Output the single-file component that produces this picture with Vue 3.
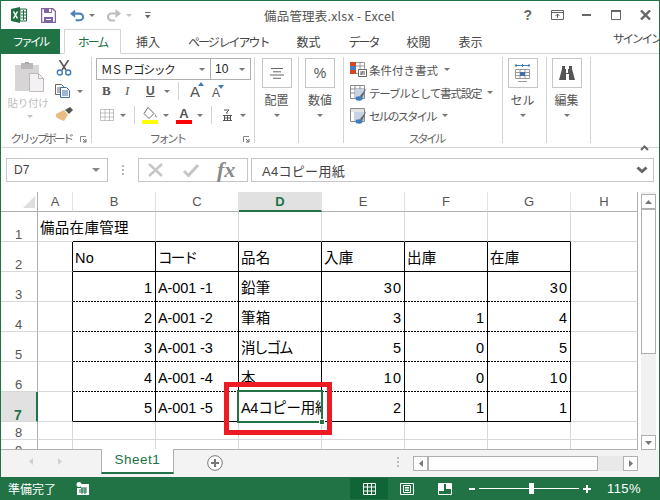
<script setup>
const tabs = [
  { label: '挿入' },
  { label: 'ページ レイアウト', kana: true },
  { label: '数式' },
  { label: 'データ', kana: true },
  { label: '校閲' },
  { label: '表示' },
]
const cols = ['A', 'B', 'C', 'D', 'E', 'F', 'G', 'H']
const rows = [
  ['備品在庫管理', '', '', '', '', '', '', ''],
  ['', 'No', 'コード', '品名', '入庫', '出庫', '在庫', ''],
  ['', 1, 'A-001 -1', '鉛筆', 30, '', 30, ''],
  ['', 2, 'A-001 -2', '筆箱', 3, 1, 4, ''],
  ['', 3, 'A-001 -3', '消しゴム', 5, 0, 5, ''],
  ['', 4, 'A-001 -4', '本', 10, 0, 10, ''],
  ['', 5, 'A-001 -5', 'A4コピー用紙', 2, 1, 1, ''],
  ['', '', '', '', '', '', '', ''],
  ['', '', '', '', '', '', '', ''],
]

function cellClass(r, c, value) {
  const inBox = r >= 1 && r <= 6
  const inCols = c >= 1 && c <= 6
  return {
    num: typeof value === 'number',
    code: c === 2 && r >= 2,
    narrow: value === 'コード' || value === '消しゴム',
    tight: value === 'A4コピー用紙',
    'line-right': inBox && c <= 6,
    'no-right': r === 0 && c === 0,
    'line-bottom': (r === 0 || r === 1 || r === 6) && inCols,
    'dot-bottom': r >= 2 && r <= 5 && inCols,
  }
}
</script>

<template>
  <div class="win">
    <header class="title">
      <div class="qat">
        <svg class="xl" width="16" height="16" viewBox="0 0 16 16">
          <path d="M0 2 9 0v16l-9-2z" fill="#1e6e41" />
          <path d="M9 2h6.500v12H9z" fill="#fff" stroke="#1e6e41" />
          <path d="M10 5h5M10 8h5M10 11h5M12.500 3v10" stroke="#1e6e41" />
          <path d="m2.500 4.500 4 7M6.500 4.500l-4 7" stroke="#fff" stroke-width="1.500" />
        </svg>
        <svg class="save" width="15" height="15" viewBox="0 0 15 15">
          <path d="M.500.500h11l3 3v11H.500z" fill="#fff" stroke="#8064a2" stroke-width="1.500" />
          <path d="M3 0h8v5H3zM3 9h9v6H3z" fill="#8064a2" />
          <path d="M8 1h2v3H8zM5 11h5v1H5z" fill="#fff" />
        </svg>
        <svg class="undo" width="15" height="13" viewBox="0 0 16 13">
          <path d="M2 4.500h8a4 3.500 0 0 1 0 7H6" fill="none" stroke="#4f81bd" stroke-width="2.200" />
          <path d="M5.500 0v9L0 4.500z" fill="#4f81bd" />
        </svg>
        <i class="caret undo-caret"></i>
        <svg class="redo" width="15" height="13" viewBox="0 0 15 13">
          <path d="M13 4.500H5.500a3.500 3.500 0 0 0 0 7H9" fill="none" stroke="#bdbdbd" stroke-width="2.200" />
          <path d="M9.500 0v9L15 4.500z" fill="#bdbdbd" />
        </svg>
        <i class="caret redo-caret"></i>
        <svg class="custom" width="6" height="7" viewBox="0 0 6 7">
          <path d="M0 .500h5.500" stroke="#666" />
          <path d="M0 3h5.500L2.750 6.500z" fill="#666" />
        </svg>
      </div>
      <div class="doc">備品管理表.xlsx - Excel</div>
      <div class="winbtns">
        <span class="help">?</span>
        <svg width="13" height="10" viewBox="0 0 13 10">
          <path d="M.500.500h12v9H.500z M.500 2.500h12" fill="none" stroke="#666" />
          <path d="M6.500 8V4M4.500 6l2-2 2 2" fill="none" stroke="#666" />
        </svg>
        <svg width="9" height="2" viewBox="0 0 9 2"><path d="M0 0h9v2H0z" fill="#666" /></svg>
        <svg width="10" height="10" viewBox="0 0 10 10">
          <path d="M.500.500h9v9h-9z" fill="none" stroke="#666" />
          <path d="M0 0h10v2H0z" fill="#666" />
        </svg>
        <svg width="11" height="10" viewBox="0 0 11 10">
          <path d="m1 .500 9 9M10 .500l-9 9" stroke="#666" stroke-width="2.400" />
        </svg>
      </div>
    </header>

    <nav class="tabs">
      <div class="file">ファイル</div>
      <div class="home">ホーム</div>
      <div v-for="t in tabs" :key="t.label" class="tab" :class="{ kana: t.kana }">{{ t.label }}</div>
      <div class="signin">サインイン</div>
    </nav>

    <section class="ribbon">
      <div class="group g-clip">
        <div class="g-body clip-body">
          <div class="paste">
            <svg width="29" height="30" viewBox="0 0 29 30">
              <path d="M0 3h24v26H0z" fill="#d8d5d6" />
              <path d="M6 1h12v6H6z" fill="#bcb8b9" />
              <path d="M10 0h4v2h-4z" fill="#a9a5a6" />
              <path d="M14.500 11.500h9l5 5v13h-14z" fill="#f3f1f3" stroke="#bdb9ba" />
              <path d="M23.500 11.500v5h5" fill="none" stroke="#bdb9ba" />
            </svg>
            <span class="paste-label">貼り付け</span>
            <i class="caret pale"></i>
          </div>
          <div class="clip-tools">
            <svg width="16" height="16" viewBox="0 0 16 16">
              <path d="m3.500 0 6.500 10M12.500 0 6 10" stroke="#555" stroke-width="1.600" />
              <circle cx="3.800" cy="12.500" r="2.500" fill="#fff" stroke="#3f7cb8" stroke-width="1.400" />
              <circle cx="12.200" cy="12.500" r="2.500" fill="#fff" stroke="#3f7cb8" stroke-width="1.400" />
            </svg>
            <div class="copy">
              <svg width="16" height="14" viewBox="0 0 16 14">
                <path d="M.500.500h6l2 2v8h-8z" fill="#fff" stroke="#666" />
                <path d="M2 4h4M2 6h4M2 8h4" stroke="#666" />
                <path d="M5.500 3.500h6l3 3v7h-9z" fill="#fff" stroke="#3f6f9f" />
                <path d="M7 7h6M7 9h6M7 11h6" stroke="#3f6f9f" />
              </svg>
              <i class="caret"></i>
            </div>
            <svg class="brush" width="17" height="14" viewBox="0 0 17 14">
              <path d="m0 7 8-4 4 5-4 6-5-2-3-2z" fill="#e8bd81" />
              <path d="m9 3 5-3 3 3-4 4z" fill="#555" />
            </svg>
          </div>
        </div>
        <div class="g-label left">クリップボード<svg class="launch" width="7" height="7" viewBox="0 0 7 7"><path d="M.500 6V.500H6" fill="none" stroke="#888" /><path d="M3 3l3 3M3 6h3V3" fill="none" stroke="#666" /></svg></div>
      </div>

      <div class="group g-font">
        <div class="g-body font-body">
          <div class="font-row1">
            <div class="combo fname">ＭＳ Ｐゴシック<i class="caret"></i></div>
            <div class="combo fsize">10<i class="caret"></i></div>
          </div>
          <div class="font-row2">
            <b class="bi">B</b>
            <i class="bi it">I</i>
            <span class="bi un">U</span><i class="caret"></i>
            <span class="vsep"></span>
            <span class="grow">A<svg width="6" height="4" viewBox="0 0 6 4"><path d="M0 4h6L3 0z" fill="#3f7cb8" /></svg></span>
            <span class="grow small">A<svg width="6" height="4" viewBox="0 0 6 4"><path d="M0 0h6L3 4z" fill="#3f7cb8" /></svg></span>
          </div>
          <div class="font-row3">
            <svg width="14" height="12" viewBox="0 0 14 12">
              <path d="M.500.500h13v11H.500zM5 .500v11M9.500.500v11M.500 4h13M.500 8h13" fill="none" stroke="#8a8a8a" stroke-dasharray="1 1" />
            </svg>
            <i class="caret"></i>
            <span class="vsep"></span>
            <span class="fill">
              <svg width="16" height="13" viewBox="0 0 16 13">
                <path d="m6 .500 6 6-5 5-5-5z" fill="#fff" stroke="#666" />
                <path d="M13 7c1.500 2 2 3 1.500 3.500-1 .5-1.500-1-1.500-3.500z" fill="#888" />
              </svg>
              <span class="bar yellow"></span>
            </span>
            <i class="caret"></i>
            <span class="fcolor">A<span class="bar red"></span></span>
            <i class="caret"></i>
            <span class="vsep"></span>
            <svg class="phon" width="9" height="12" viewBox="0 0 9 12">
              <path d="M1 1h5L3.500 3.500M4 3v2" fill="none" stroke="#555" />
              <path d="M0 6.500h9M1.500 6.500v5M7.500 6.500v5M4.500 6.500v5M1.500 9h6M0 11.500h9" fill="none" stroke="#555" />
            </svg>
            <i class="caret"></i>
          </div>
        </div>
        <div class="g-label left">フォント<svg class="launch" width="7" height="7" viewBox="0 0 7 7"><path d="M.500 6V.500H6" fill="none" stroke="#888" /><path d="M3 3l3 3M3 6h3V3" fill="none" stroke="#666" /></svg></div>
      </div>

      <div class="group g-mini">
        <div class="mini">
          <span class="mini-box">
            <svg width="14" height="11" viewBox="0 0 14 11"><path d="M1 .500h12M3 3.800h8M0 7h14M3 10.300h8" stroke="#666" /></svg>
          </span>
          <span class="mini-label">配置</span>
          <i class="caret"></i>
        </div>
      </div>
      <div class="group g-mini wide">
        <div class="mini shift-a">
          <span class="mini-box pct">%</span>
          <span class="mini-label">数値</span>
          <i class="caret"></i>
        </div>
      </div>

      <div class="group g-style">
        <div class="g-body style-body">
          <div class="style-row">
            <svg width="17" height="15" viewBox="0 0 17 15">
              <path d="M.500.500h14v11H.500z" fill="#fff" stroke="#999" />
              <path d="M0 0h6v4H0z" fill="#d24726" />
              <path d="M0 4h6v4H0z" fill="#4a7ebb" />
              <path d="M0 8h6v4H0z" fill="#d24726" />
              <path d="M6 4h9M10 0v8" stroke="#999" />
              <path d="M8.500 7.500h8v7h-8z" fill="#fff" stroke="#666" />
              <path d="M10 10h5M10 12h5M13 9l-2 4" stroke="#666" />
            </svg>
            <span>条件付き書式</span><i class="caret"></i>
          </div>
          <div class="style-row">
            <svg width="17" height="16" viewBox="0 0 17 16">
              <path d="M.500.500h14v13H.500zM5 .500v13M10 .500v13M.500 4h14M.500 8h14" fill="#fff" stroke="#8a8a8a" />
              <path d="M5 4h9v9H5z" fill="#c5d3e5" />
              <path d="M16.500 3 10 11l2 2z" fill="#666" />
              <ellipse cx="9" cy="13.500" rx="3.500" ry="2.200" fill="#3f7cb8" />
            </svg>
            <span class="st-table">テーブルとして書式設定</span><i class="caret"></i>
          </div>
          <div class="style-row">
            <svg width="17" height="16" viewBox="0 0 17 16">
              <path d="M.500.500h14v13H.500z" fill="#fff" stroke="#8a8a8a" />
              <path d="M1 1h13v3H1z" fill="#e4e4e4" />
              <path d="M4 4h10v9H4z" fill="#c5d3e5" />
              <path d="M16.500 3 10 11l2 2z" fill="#666" />
              <ellipse cx="9" cy="13.500" rx="3.500" ry="2.200" fill="#3f7cb8" />
            </svg>
            <span class="st-cell">セルのスタイル</span><i class="caret"></i>
          </div>
        </div>
        <div class="g-label">スタイル</div>
      </div>

      <div class="group g-mini">
        <div class="mini shift-b">
          <span class="mini-box">
            <svg width="15" height="19" viewBox="0 0 15 19">
              <path d="M.500 5.500h14v9H.500zM5 5.500v9M10 5.500v9M.500 8.500h14M.500 11.500h14" fill="none" stroke="#999" />
              <path d="M5 8h5v4H5z" fill="#3f6fb0" />
              <path d="M0 1.500h15M1 0v3M14 0v3M7.500 0v3" stroke="#3f7cb8" />
              <path d="M3 17.500h9" stroke="#999" />
            </svg>
          </span>
          <span class="mini-label">セル</span>
          <i class="caret"></i>
        </div>
      </div>
      <div class="group g-mini">
        <div class="mini shift-b">
          <span class="mini-box">
            <svg width="16" height="14" viewBox="0 0 16 14">
              <path d="M3 0h3v3h1v4h2V3h1V0h3v3l3 11h-6V8H7v6H0L3 3z" fill="#555" />
            </svg>
          </span>
          <span class="mini-label">編集</span>
          <i class="caret"></i>
        </div>
      </div>

      <div class="collapse">
        <svg width="9" height="6" viewBox="0 0 9 6"><path d="m1 5 3.500-3.500L8 5" fill="none" stroke="#666" stroke-width="2" /></svg>
      </div>
    </section>

    <section class="formula">
      <div class="namebox">D7<i class="caret"></i></div>
      <div class="grip"><span></span><span></span><span></span></div>
      <div class="fxbox">
        <svg width="15" height="14" viewBox="0 0 15 14"><path d="m1 1 13 12M14 1 1 13" stroke="#c6c6c6" stroke-width="2.400" /></svg>
        <svg width="16" height="13" viewBox="0 0 16 13"><path d="m1 7 4.500 4.500L15 1" fill="none" stroke="#c6c6c6" stroke-width="3" /></svg>
        <span class="fx">fx</span>
      </div>
      <div class="input">
        <span>A4コピー用紙</span>
        <svg width="12" height="8" viewBox="0 0 12 8"><path d="m1.500 1.500 4.500 4 4.500-4" fill="none" stroke="#666" stroke-width="3" /></svg>
      </div>
    </section>

    <section class="sheet-wrap">
      <div class="sheet">
        <div class="corner"><svg width="12" height="12" viewBox="0 0 12 12"><path d="M12 0v12H0z" fill="#dedede" /></svg></div>
        <div v-for="c in cols" :key="c" class="colhead" :class="{ active: c === 'D' }">{{ c }}</div>
        <template v-for="(row, r) in rows" :key="r">
          <div class="rowhead" :class="{ active: r === 6 }">{{ r + 1 }}</div>
          <div v-for="(value, c) in row" :key="c" class="cell" :class="cellClass(r, c, value)">{{ value }}</div>
        </template>
        <div class="sel"><i class="handle"></i></div>
        <div class="redbox"></div>
      </div>
      <div class="vscroll">
        <div class="sb-btn"><svg width="7" height="4" viewBox="0 0 7 4"><path d="M0 4h7L3.500 0z" fill="#777" /></svg></div>
        <div class="sb-thumb"></div>
        <div class="sb-btn"><svg width="7" height="4" viewBox="0 0 7 4"><path d="M0 0h7L3.500 4z" fill="#777" /></svg></div>
      </div>
    </section>

    <section class="sheettabs">
      <div class="nav">
        <svg width="4" height="7" viewBox="0 0 4 7"><path d="M4 0v7L0 3.500z" fill="#d0d0d0" /></svg>
        <svg width="4" height="7" viewBox="0 0 4 7"><path d="M0 0v7l4-3.500z" fill="#d0d0d0" /></svg>
      </div>
      <div class="stab">Sheet1</div>
      <svg class="plus" width="16" height="16" viewBox="0 0 16 16">
        <circle cx="8" cy="8" r="7.300" fill="#fff" stroke="#777" />
        <path d="M8 4v8M4 8h8" stroke="#777" stroke-width="2" />
      </svg>
      <div class="hgrip"><span></span><span></span><span></span></div>
      <div class="hscroll">
        <div class="hb"><svg width="4" height="7" viewBox="0 0 4 7"><path d="M4 0v7L0 3.500z" fill="#777" /></svg></div>
        <div class="h-thumb"></div>
        <div class="h-track"></div>
        <div class="hb"><svg width="4" height="7" viewBox="0 0 4 7"><path d="M0 0v7l4-3.500z" fill="#777" /></svg></div>
      </div>
    </section>

    <footer class="status">
      <span class="ready">準備完了</span>
      <svg class="macro" width="13" height="13" viewBox="0 0 13 13">
        <circle cx="3" cy="2.500" r="2.500" fill="#fff" />
        <path d="M5 2h8v11H1V6h4z" fill="#fff" />
        <path d="M3 8h8M3 10h8M5 6h6M6 6v6M9 6v6" stroke="#217346" />
      </svg>
      <div class="views">
        <span class="view on">
          <svg width="13" height="12" viewBox="0 0 13 12"><path d="M.500.500h12v11H.500zM4.500.500v11M8.500.500v11M.500 4h12M.500 8h12" fill="none" stroke="#fff" /></svg>
        </span>
        <span class="view">
          <svg width="14" height="12" viewBox="0 0 14 12"><path d="M.500.500h13v11H.500z" fill="none" stroke="#fff" /><path d="M3.500 2.500h7v7h-7zM5 4.500h4M5 6h4M5 7.500h4" fill="none" stroke="#fff" /></svg>
        </span>
        <span class="view">
          <svg width="14" height="12" viewBox="0 0 14 12"><path d="M.500.500h13v11H.500z" fill="none" stroke="#fff" /><path d="M1 1h5v7H1zM8 1h5v5H8z" fill="#fff" /></svg>
        </span>
      </div>
      <div class="zoom">
        <span class="zbtn minus"></span>
        <div class="ztrack"><span class="zknob"></span></div>
        <span class="zbtn plusb"></span>
        <span class="zpct">115%</span>
      </div>
    </footer>
  </div>
</template>

<style>
html, body { margin: 0; overflow: hidden; background: #fff; }
</style>

<style scoped>
.win {
  width: 660px;
  height: 500px;
  box-sizing: border-box;
  border: solid #217346;
  border-width: 1px 1px 0;
  background: #fff;
  display: flex;
  flex-direction: column;
  overflow: hidden;
  color: #444;
  font: 12px "Noto Sans", "Noto Sans CJK JP", sans-serif;
}
.caret {
  display: inline-block;
  width: 0;
  height: 0;
  border: 3px solid transparent;
  border-top: 3px solid #777;
  border-bottom: 0;
  flex: none;
}
.caret.pale { border-top-color: #c4c4c4; }

/* Title */
.title { height: 28px; display: flex; align-items: center; flex: none; position: relative; }
.qat { display: flex; align-items: center; width: 263px; flex: none; height: 28px; }
.xl { margin-left: 10px; }
.save { margin-left: 14px; }
.undo { margin-left: 14px; }
.undo-caret { margin-left: 4px; }
.redo { margin-left: 11px; }
.redo-caret { margin-left: 5px; border-top-color: #c4c4c4; }
.custom { margin-left: 13px; }
.doc { color: #555; font-size: 12.500px; letter-spacing: .2px; white-space: nowrap; font-family: "Noto Sans CJK JP", sans-serif; }
.winbtns { margin-left: auto; display: flex; align-items: center; padding-right: 8px; }
.winbtns > svg:nth-of-type(1) { margin-left: 19px; }
.winbtns > svg:nth-of-type(2) { margin-left: 18px; }
.winbtns > svg:nth-of-type(3) { margin-left: 20px; }
.winbtns > svg:nth-of-type(4) { margin-left: 19px; }
.help { font: bold 14px "Liberation Sans", sans-serif; color: #666; }

/* Tabs */
.tabs { height: 25px; display: flex; flex: none; position: relative; border-bottom: 1px solid #d4d4d4; box-sizing: border-box; font-family: "Noto Sans CJK JP", sans-serif; }
.file { width: 60px; margin-left: -1px; background: #217346; color: #fff; font-size: 11.500px; letter-spacing: -2.800px; line-height: 25px; text-align: center; height: 25px; flex: none; }
.home { width: 57px; margin-left: 4px; height: 25px; box-sizing: border-box; border: 1px solid #d4d4d4; border-bottom: 1px solid #fff; background: #fff; color: #217346; text-align: center; line-height: 24px; font-size: 12px; letter-spacing: -2px; flex: none; }
.tab { font-size: 12px; line-height: 25px; padding: 0 14px; white-space: nowrap; flex: none; }
.tab.kana { letter-spacing: -2px; }
.home + .tab { padding-left: 15px; }
.signin { position: absolute; left: 612px; top: -3px; font-size: 11.500px; letter-spacing: -2px; line-height: 25px; white-space: nowrap; }

/* Ribbon */
.ribbon { height: 94px; display: flex; flex: none; padding: 3px 0 0; box-sizing: border-box; border-bottom: 1px solid #d4d4d4; position: relative; font-family: "Noto Sans CJK JP", sans-serif; }
.group { border-right: 1px solid #d4d4d4; height: 86px; display: flex; flex-direction: column; box-sizing: border-box; flex: none; }
.g-body { flex: 1; display: flex; min-height: 0; }
.g-label { height: 12px; line-height: 12px; margin-bottom: -1px; font-size: 11.500px; letter-spacing: -2.800px; color: #666; text-align: center; position: relative; white-space: nowrap; flex: none; }
.g-label.left { padding-right: 16px; }
.launch { position: absolute; right: 4px; top: 4px; }
.g-clip { width: 91px; padding-left: 6px; }
.clip-body { gap: 6px; padding-top: 2px; }
.paste { width: 42px; display: flex; flex-direction: column; align-items: center; padding-top: 3px; }
.paste svg { margin-left: 3px; flex: none; }
.paste-label { color: #bdbdbd; font-size: 10.500px; white-space: nowrap; line-height: 14px; margin-top: 4px; letter-spacing: -.3px; }
.paste .caret { margin-top: 5px; margin-left: 3px; }
.clip-tools { display: flex; flex-direction: column; gap: 8px; padding-top: 1px; align-items: flex-start; padding-left: 1px; }
.copy { display: flex; align-items: center; gap: 6px; margin-left: -1px; }
.brush { margin-top: 1px; }
.g-font { width: 163px; padding-left: 4px; }
.font-body { flex-direction: column; padding-top: 1px; }
.font-row1 { display: flex; height: 22px; flex: none; }
.combo { border: 1px solid #b0b0b0; box-sizing: border-box; height: 22px; display: flex; align-items: center; justify-content: space-between; padding: 0 3px 0 4px; color: #222; font-size: 11.500px; white-space: nowrap; }
.combo .caret { margin-right: 2px; }
.fname { width: 115px; letter-spacing: -1.200px; }
.fsize { width: 40px; border-left: 0; font-family: "Liberation Sans", sans-serif; font-size: 12px; letter-spacing: 0; }
.font-row2 { display: flex; align-items: center; height: 22px; padding-left: 6px; flex: none; }
.bi { font: bold 13px "Liberation Serif", serif; width: 24px; color: #555; }
.bi.it { font: italic 13px "Liberation Serif", serif; margin-left: -1px; width: 21px; }
.bi.un { font: bold 12px "Liberation Sans", sans-serif; width: 14px; text-decoration: underline; margin-right: 4px; }
.vsep { width: 1px; height: 18px; background: #d4d4d4; flex: none; }
.font-row2 .vsep { margin: 0 11px 0 8px; }
.font-row3 .vsep { margin: 0 7px 0 8px; }
.grow { font: 15px "Liberation Sans", sans-serif; color: #555; position: relative; margin-right: 8px; display: inline-flex; align-items: flex-start; }
.grow.small { font-size: 12px; margin-top: 3px; }
.grow svg { margin-top: -1px; margin-left: -2px; }
.font-row3 { display: flex; align-items: center; height: 20px; margin-top: 3px; padding-left: 4px; flex: none; }
.font-row3 > .caret { margin-left: 5px; }
.font-row3 > svg + .caret { margin-left: 6px; }
.font-row3 > .phon + .caret { margin-left: 8px; }
.fill { display: flex; flex-direction: column; align-items: center; width: 16px; }
.fcolor { font: bold 13px/13px "Liberation Sans", sans-serif; color: #555; display: flex; flex-direction: column; align-items: center; width: 16px; margin-left: 7px; }
.bar { display: block; width: 16px; height: 4px; }
.yellow { background: #ffff00; }
.red { background: #ff0000; }
.phon { margin-left: 4px; }
.g-mini { width: 44px; }
.g-mini.wide { width: 45px; }
.mini { display: flex; flex-direction: column; align-items: center; padding-top: 1px; }
.shift-a { padding-right: 2px; }
.shift-b { padding-right: 4px; }
.mini-box { width: 30px; height: 30px; border: 1px solid #c6c6c6; box-sizing: border-box; display: flex; align-items: center; justify-content: center; color: #555; }
.pct { font: 14px "Liberation Sans", sans-serif; }
.mini-label { font-size: 12px; line-height: 16px; margin-top: 4px; color: #555; white-space: nowrap; }
.mini .caret { margin-top: 6px; }
.g-style { width: 159px; padding-left: 6px; }
.style-body { flex-direction: column; padding-top: 1px; }
.style-row { display: flex; align-items: center; gap: 2px; height: 23px; flex: none; font-size: 11.500px; color: #555; white-space: nowrap; }
.st-table { letter-spacing: -1.200px; }
.st-cell { letter-spacing: -2px; }
.style-row .caret { margin-left: 4px; }
.collapse { position: absolute; left: 639px; top: 83px; }

/* Formula */
.formula { height: 44px; flex: none; display: flex; align-items: flex-start; padding-top: 10px; box-sizing: border-box; }
.namebox { margin-left: 5px; width: 102px; height: 24px; box-sizing: border-box; border: 1px solid #c6c6c6; display: flex; align-items: center; justify-content: space-between; padding: 0 7px; font: 12px "Liberation Sans", sans-serif; color: #444; }
.namebox .caret { border-width: 4px 4px 0; border-top-color: #888; }
.grip { width: 30px; height: 24px; display: flex; flex-direction: column; align-items: center; justify-content: center; gap: 2px; }
.grip span, .hgrip span { display: block; width: 2px; height: 2px; background: #bbb; }
.fxbox { width: 110px; height: 24px; box-sizing: border-box; border: 1px solid #c6c6c6; display: flex; align-items: center; padding-left: 9px; gap: 21px; }
.fxbox svg + svg { margin-left: -1px; }
.fx { font: italic bold 22px/22px "Liberation Serif", serif; color: #8a8a8a; margin-left: -3px; }
.input { margin-left: 3px; width: 403px; height: 24px; box-sizing: border-box; border: 1px solid #c6c6c6; display: flex; align-items: center; justify-content: space-between; padding: 0 5px 0 10px; font: 13px "Liberation Sans", "Noto Sans CJK JP", sans-serif; letter-spacing: .3px; color: #444; }

/* Sheet */
.sheet-wrap { height: 258px; flex: none; display: flex; overflow: hidden; }
.sheet {
  width: 637px;
  height: 258px;
  flex: none;
  position: relative;
  display: grid;
  grid-template-columns: 37px 35px repeat(6, 83px) 67px;
  grid-template-rows: 20px repeat(7, 30px) 18px 18px;
  overflow: hidden;
  box-sizing: border-box;
  border-bottom: 1px solid #b0b0b0;
  font: 14.500px "Liberation Sans", "Noto Sans CJK JP", sans-serif;
  color: #000;
}
.corner { border-right: 1px solid #b0b0b0; border-bottom: 1px solid #b0b0b0; box-sizing: border-box; display: flex; align-items: flex-end; justify-content: flex-end; padding: 0 2px 3px 0; }
.colhead { border-right: 1px solid #e2e2e2; border-bottom: 1px solid #b0b0b0; box-sizing: border-box; text-align: center; font-size: 13px; line-height: 20px; color: #555; font-family: "Liberation Sans", sans-serif; }
.colhead:nth-child(9) { border-right-color: #b0b0b0; }
.colhead.active { background: #e1e1e1; color: #217346; font-weight: bold; border-bottom: 2px solid #217346; }
.rowhead { border-right: 1px solid #b0b0b0; border-bottom: 1px solid #d8d8d8; box-sizing: border-box; display: flex; justify-content: center; align-items: flex-end; font-size: 13px; line-height: 12px; color: #555; padding-right: 1px; font-family: "Liberation Sans", sans-serif; }
.rowhead.active { background: #e1e1e1; color: #217346; font-weight: bold; font-size: 14px; border-right: 2px solid #217346; }
.cell { border-right: 1px solid #d8d8d8; border-bottom: 1px solid #d8d8d8; box-sizing: border-box; padding: 0 3px 0 2px; display: flex; align-items: flex-end; white-space: nowrap; overflow: hidden; line-height: 26px; letter-spacing: .3px; }
.cell:nth-child(9n + 9) { border-right-color: #b0b0b0; }
.cell.num { justify-content: flex-end; letter-spacing: 1px; padding-right: 2px; }
.cell.code { letter-spacing: -.1px; }
.cell.narrow { letter-spacing: -1.800px; }
.cell.tight { letter-spacing: -.3px; }
.cell.no-right { border-right: 0; overflow: visible; }
.cell.line-right { border-right-color: #000; }
.cell.line-bottom { border-bottom-color: #000; }
.cell.dot-bottom { border-bottom: 0; padding-bottom: 1px; background: repeating-linear-gradient(90deg, #000 0 2px, transparent 2px 3px) left bottom / 100% 1px no-repeat; }
.sel { position: absolute; left: 236px; top: 198px; width: 86px; height: 33px; box-sizing: border-box; border: 2px solid #217346; pointer-events: none; }
.handle { position: absolute; right: -4px; bottom: -4px; width: 6px; height: 6px; box-sizing: border-box; background: #217346; border: 1px solid #fff; box-shadow: none; }
.redbox { position: absolute; left: 223px; top: 190px; width: 108px; height: 53px; box-sizing: border-box; border: 5.500px solid #ed1c24; pointer-events: none; }

.vscroll { margin-left: 3px; width: 15px; flex: none; background: #f1f1f1; display: flex; flex-direction: column; padding-top: 2px; box-sizing: border-box; height: 258px; }
.sb-btn { width: 15px; height: 15px; box-sizing: border-box; border: 1px solid #b0b0b0; background: #fff; display: flex; align-items: center; justify-content: center; flex: none; }
.sb-thumb { width: 15px; height: 145px; box-sizing: border-box; border: 1px solid #b0b0b0; background: #fff; margin-bottom: auto; flex: none; }

/* Sheet tabs */
.sheettabs { height: 27px; flex: none; display: flex; align-items: flex-start; background: #f3f3f3; position: relative; }
.nav { width: 100px; height: 23px; display: flex; align-items: center; gap: 25px; padding-left: 28px; box-sizing: border-box; flex: none; }
.stab { width: 73px; height: 25px; box-sizing: border-box; margin-top: -1px; background: #fff; border: 1px solid #b0b0b0; border-top: 0; border-bottom: 2px solid #217346; color: #217346; text-align: center; font: 13.500px/22px "Liberation Sans", sans-serif; letter-spacing: .5px; flex: none; }
.plus { margin: 5px 0 0 33px; flex: none; }
.hgrip { display: flex; flex-direction: column; gap: 2px; margin: 7px 0 0 174px; width: 2px; flex: none; }
.hscroll { display: flex; margin: 6px 0 0 14px; width: 225px; height: 15px; flex: none; }
.hb { width: 15px; height: 15px; box-sizing: border-box; border: 1px solid #b0b0b0; background: #fff; display: flex; align-items: center; justify-content: center; flex: none; }
.h-thumb { width: 170px; box-sizing: border-box; border: 1px solid #b0b0b0; background: #fff; flex: none; }
.h-track { flex: 1; background: #e9e9e9; }

/* Status */
.status { flex: 1; margin: 0 -1px; background: #217346; color: #fff; display: flex; align-items: center; position: relative; }
.ready { font: 12px "Noto Sans CJK JP", sans-serif; margin-left: 8px; width: 48px; white-space: nowrap; }
.macro { margin-left: 20px; flex: none; }
.views { display: flex; margin-left: 261px; height: 21px; flex: none; }
.view { width: 38px; display: flex; align-items: center; justify-content: center; }
.view.on { background: #0f6535; }
.zoom { display: flex; align-items: center; margin-left: 5px; }
.zbtn { display: block; position: relative; width: 6px; height: 2px; background: #fff; flex: none; }
.zbtn.plusb { width: 8px; }
.zbtn.plusb::after { content: ""; position: absolute; left: 3px; top: -3px; width: 2px; height: 8px; background: #fff; }
.ztrack { width: 100px; height: 1px; background: #fff; margin: 0 4px; position: relative; flex: none; }
.zknob { position: absolute; left: 50px; top: -5px; width: 5px; height: 11px; background: #fff; }
.zpct { font: 13px "Liberation Sans", sans-serif; margin-left: 16px; letter-spacing: .4px; }
</style>
